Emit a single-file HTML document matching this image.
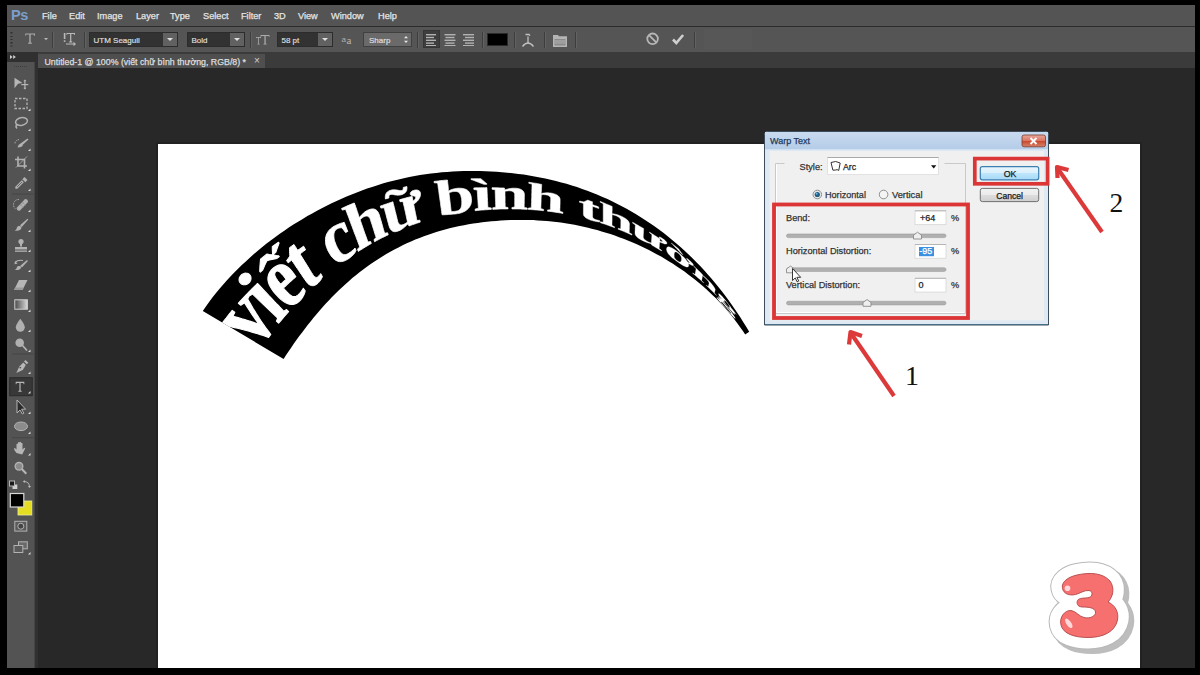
<!DOCTYPE html>
<html><head><meta charset="utf-8">
<style>
*{margin:0;padding:0;box-sizing:border-box}
html,body{width:1200px;height:675px;overflow:hidden;background:#000;font-family:"Liberation Sans",sans-serif}
.a{position:absolute}
#menubar{left:7px;top:5px;width:1188px;height:21px;background:#545454}
#menuline{left:7px;top:26px;width:1188px;height:1px;background:#2c2c2c}
.m{position:absolute;top:11px;font-size:9.2px;color:#e4e4e4;line-height:10px;-webkit-text-stroke:0.25px #e4e4e4}
#ps{left:11px;top:8px;font-size:14.5px;font-weight:bold;color:#7b9fcc;letter-spacing:-0.3px;line-height:14px}
#opts{left:7px;top:27px;width:1188px;height:25px;background:#555555}
#tabrow{left:35px;top:52px;width:1160px;height:16px;background:#3b3b3b}
#doc{left:35px;top:68px;width:1160px;height:600px;background:#282828}
#tab{left:38px;top:54px;width:227px;height:14px;background:#4f4f4f}
#tabtxt{left:44.5px;top:57.5px;font-size:8.8px;color:#dedede;white-space:nowrap;line-height:9px;-webkit-text-stroke:0.25px #dedede}
#tools{left:7px;top:52px;width:28px;height:616px;background:#535353;border-right:1px solid #454545}
#toolshead{left:7px;top:52px;width:28px;height:10px;background:#303030}
#canvas{left:158px;top:144px;width:982px;height:524px;background:#fff;box-shadow:0 0 0 2px #222}
.sep{position:absolute;top:32px;width:2px;height:16px;border-left:1px solid #3d3d3d;border-right:1px solid #626262}
.dd{position:absolute;top:32px;height:15px;background:#323232;border:1px solid #2c2c2c}
.dd span{position:absolute;left:3.5px;top:3px;font-size:8px;color:#dcdcdc;line-height:9px;white-space:nowrap;-webkit-text-stroke:0.2px #dcdcdc}
.dd i{position:absolute;right:0;top:0;width:14px;height:13px;background:#616161}
.dd i:after{content:"";position:absolute;left:4px;top:5px;border-left:3px solid transparent;border-right:3px solid transparent;border-top:3px solid #e0e0e0}
</style></head><body>
<div id="menubar" class="a"></div>
<div id="menuline" class="a"></div>
<div id="ps" class="a">Ps</div>
<span class="m" style="left:42px">File</span>
<span class="m" style="left:69px">Edit</span>
<span class="m" style="left:97px">Image</span>
<span class="m" style="left:136px">Layer</span>
<span class="m" style="left:170px">Type</span>
<span class="m" style="left:203px">Select</span>
<span class="m" style="left:241px">Filter</span>
<span class="m" style="left:274px">3D</span>
<span class="m" style="left:298px">View</span>
<span class="m" style="left:331px">Window</span>
<span class="m" style="left:378px">Help</span>

<div id="opts" class="a"></div>
<div class="sep" style="left:52px"></div>
<div class="sep" style="left:84px"></div>
<div class="dd" style="left:89px;width:89px"><span>UTM Seagull</span><i></i></div>
<div class="dd" style="left:187px;width:58px"><span>Bold</span><i></i></div>
<div class="sep" style="left:250px"></div>
<div class="dd" style="left:277px;width:56px"><span>58 pt</span><i></i></div>
<div class="dd" style="left:363px;width:49px;background:#6a6a6a;border-color:#404040"><span style="left:5px">Sharp</span></div>
<div class="sep" style="left:417px"></div>
<div class="a" style="left:423px;top:30px;width:17px;height:18px;background:#3e3e3e;border:1px solid #353535"></div>
<div class="sep" style="left:482px"></div>
<div class="a" style="left:487px;top:33px;width:21px;height:13px;background:#000;border:1px solid #2a2a2a"></div>
<div class="sep" style="left:514px"></div>
<div class="sep" style="left:544px"></div>
<div class="sep" style="left:575px"></div>
<div class="sep" style="left:694px"></div>
<div class="a" style="left:704px;top:29px;width:48px;height:20px;background:#575757"></div>

<div id="tabrow" class="a"></div>
<div id="doc" class="a"></div>
<div id="tab" class="a"></div>
<div id="tabtxt" class="a">Untitled-1 @ 100% (viết chữ bình thường, RGB/8) *</div>
<div class="a" style="left:254px;top:56px;font-size:10px;color:#cfcfcf;line-height:10px">×</div>
<div class="a" style="left:35px;top:52px;width:3px;height:616px;background:#303030"></div>
<div id="tools" class="a"></div>
<div id="toolshead" class="a"></div>
<div id="canvas" class="a"></div>

<svg class="a" style="left:0;top:0" width="1200" height="675" viewBox="0 0 1200 675">
<g fill="none" stroke="#b8b8b8">
<!-- options bar: grip -->
<g fill="#2e2e2e" stroke="none"><rect x="10.5" y="32" width="2" height="1.5"/><rect x="10.5" y="36" width="2" height="1"/><rect x="10.5" y="39" width="2" height="1"/><rect x="10.5" y="42" width="2" height="1.5"/><rect x="10.5" y="45.5" width="2" height="1"/></g>
<!-- T tool preset -->
<g fill="#a9a9a9" stroke="none">
<path d="M25.3 33.6h9.7v2.2h-0.8l-0.5-1.2h-3v7.8l1.2 0.4v1h-3.8v-1l1.2-0.4v-7.8h-3l-0.5 1.2h-0.5z"/>
<path d="M44 38h4l-2 2.2z" fill="#b6b6b6"/>
</g>
<!-- text orientation IT -->
<g fill="#b9b9b9" stroke="none">
<rect x="63.8" y="33" width="1.6" height="6"/><rect x="63.8" y="40.3" width="1.6" height="1.6"/>
<path d="M66.5 33h8.5v2h-0.6l-0.4-1h-2.7v7.3l1 0.3v0.8h-3.2v-0.8l1-0.3v-7.3h-2.7l-0.4 1h-0.5z"/>
<rect x="66" y="43.5" width="8" height="1"/><path d="M73.5 41.8l2.5 2.2-2.5 2.2z"/>
</g>
<!-- TT size -->
<g fill="#aaaaaa" stroke="none">
<path d="M256 37h5v1.2h-0.4l-0.3-0.5h-1.4v6h0.7v0.8h-2.2v-0.8h0.7v-6h-1.4l-0.3 0.5h-0.4z"/>
<path d="M260.5 35h9v1.8h-0.6l-0.4-0.9h-2.8v7.7l1 0.3v0.7h-3.3v-0.7l1-0.3v-7.7h-2.8l-0.4 0.9h-0.7z"/>
</g>
<!-- aa antialias -->
<text x="341.5" y="42" font-family="Liberation Sans" font-size="8" fill="#b0b0b0" stroke="none">a</text>
<text x="346.5" y="44" font-family="Liberation Serif" font-size="11" fill="#b8b8b8" stroke="none">a</text>
<!-- sharp spinner arrows -->
<g fill="#e8e8e8" stroke="none"><path d="M404 38.2l2-2.2 2 2.2z"/><path d="M404 40.8l2 2.2 2-2.2z"/></g>
<!-- align icons -->
<g fill="#b2b2b2" stroke="none">
<rect x="426" y="34" width="10" height="1.4"/><rect x="426" y="36.8" width="8" height="1.4"/><rect x="426" y="39.6" width="10" height="1.4"/><rect x="426" y="42.4" width="8" height="1.4"/><rect x="426" y="45" width="10" height="1"/>
<rect x="444.5" y="34" width="11" height="1.4"/><rect x="445.5" y="36.8" width="9" height="1.4"/><rect x="444.5" y="39.6" width="11" height="1.4"/><rect x="445.5" y="42.4" width="9" height="1.4"/><rect x="444.5" y="45" width="11" height="1"/>
<rect x="463" y="34" width="11" height="1.4"/><rect x="465" y="36.8" width="9" height="1.4"/><rect x="463" y="39.6" width="11" height="1.4"/><rect x="465" y="42.4" width="9" height="1.4"/><rect x="463" y="45" width="11" height="1"/>
</g>
<!-- warp icon -->
<g stroke="#c0c0c0" stroke-width="1.3">
<path d="M522.5 46.5q5.5-7 11 0"/>
<path d="M528 36.5v7"/><path d="M525.5 34.5h3.5l1 1.2"/>
</g>
<!-- panels icon -->
<g stroke="none">
<path d="M553 35h5l1 1.3h8v10.7h-14z" fill="#b4b4b4"/>
<rect x="554.5" y="39" width="11" height="6.5" fill="#8a8a8a"/>
<rect x="554.5" y="40.5" width="11" height="1" fill="#b4b4b4"/>
<rect x="554.5" y="42.5" width="11" height="1" fill="#b0b0b0"/>
</g>
<!-- cancel -->
<circle cx="652.6" cy="38.8" r="5.3" stroke="#b6b6b6" stroke-width="1.8"/>
<path d="M649 35.2l7.2 7.2" stroke="#b6b6b6" stroke-width="1.8"/>
<!-- commit check -->
<path d="M673 39.5l3.3 3.5 6.8-8" stroke="#cfcfcf" stroke-width="2.6"/>

<!-- tools panel -->
<g fill="#b2b2b2" stroke="none">
<path d="M10 55l2.6 2-2.6 2z" fill="#d0d0d0"/><path d="M13.2 55l2.6 2-2.6 2z" fill="#d0d0d0"/>
</g>
<path d="M14 66.5h14" stroke="#3e3e3e" stroke-width="1" stroke-dasharray="1 1"/>
<!-- move -->
<g fill="#b6b6b6" stroke="none">
<path d="M14.5 77.8l8 5.2-3.5 0.6-1.2 0.3-3.3 4.3z"/>
<path d="M24.3 80.5h1.2v8h-1.2z"/><path d="M21.3 84h7v1.2h-7z"/>
<path d="M24.9 79.5l1.6 1.8h-3.2z"/><path d="M24.9 89.5l1.6-1.8h-3.2z"/>
</g>
<!-- marquee -->
<rect x="15" y="98.5" width="12" height="10" stroke="#b2b2b2" stroke-width="1.3" stroke-dasharray="2.5 1.5"/>
<!-- lasso -->
<g stroke="#b0b0b0" stroke-width="1.5">
<ellipse cx="21.5" cy="121.5" rx="6" ry="3.8" transform="rotate(-12 21.5 121.5)"/>
<path d="M17 124.5q-2 2 0 4"/>
</g>
<!-- quick select -->
<g stroke="none" fill="#b2b2b2">
<path d="M27.5 138.5l1 1-6 5.5-2-1.5z"/>
<path d="M20.5 143.5q2 0 2.5 1.5q-1 2.5-5.5 2.5q0.5-3 3-4z"/>
</g>
<path d="M19 139.5q-4 1-4 4" stroke="#b8b8b8" stroke-width="1" stroke-dasharray="1.3 1"/>
<!-- crop -->
<g stroke="#b2b2b2" stroke-width="1.6">
<path d="M18 156.5v9.5h9"/><path d="M15 159.5h9.5v9"/><path d="M16 167.5l11-11" stroke-width="0.8"/>
</g>
<!-- eyedropper -->
<g stroke="none" fill="#b2b2b2">
<path d="M24.5 177l3 3-2.2 2.2-3-3z"/>
<path d="M21.8 180.2l2 2-6.5 6.5h-2v-2z"/>
</g>
<path d="M17 187l5-5" stroke="#535353" stroke-width="0.8"/>
<path d="M12 194h22" stroke="#474747" stroke-width="1"/>
<!-- healing -->
<g stroke="none" fill="#b0b0b0">
<path d="M25 199q3 0 3 3l-8 8.5q-3 1-3.5-2.5z"/>
</g>
<path d="M19 199.5q-5 0-5.5 5q0 3 2 4.5" stroke="#b4b4b4" stroke-width="1" stroke-dasharray="1.3 1"/>
<g fill="#8a8a8a" stroke="none"><circle cx="21" cy="205" r="0.8"/><circle cx="23" cy="203" r="0.8"/><circle cx="23" cy="207" r="0.8"/><circle cx="25" cy="205" r="0.8"/></g>
<!-- brush -->
<g stroke="none" fill="#b2b2b2">
<path d="M27.5 218.7l0.8 0.8-6.5 7.5-1.8-1.8z"/>
<path d="M18.5 226q2-0.5 3 1q0 2.5-3 3.5q-2 0.3-4 0.2q2-1 2.2-2.5q0.3-1.8 1.8-2.2z"/>
</g>
<!-- stamp -->
<g stroke="none" fill="#b2b2b2">
<circle cx="21" cy="241.5" r="2.6"/><rect x="20" y="243" width="2" height="3.5"/>
<path d="M15 247h12v2.5h-12z"/><rect x="15" y="250.5" width="12" height="1.3"/>
</g>
<!-- history brush -->
<g stroke="none" fill="#b2b2b2">
<path d="M27 260l0.9 0.9-6 6.5-1.6-1.6z"/>
<path d="M18.5 266q2-0.4 2.7 1q-0.2 2.5-3 3q-1.8 0.2-3.5 0q2-1 2-2.2q0.3-1.5 1.8-1.8z"/>
<path d="M15 262.5q3-3 8-2" stroke="#b2b2b2" stroke-width="1.2" fill="none"/>
<path d="M15 261l-0.5 3.2 3-0.5z"/>
</g>
<!-- eraser -->
<g stroke="none">
<path d="M19 280h8.5l-5 10h-8.5z" fill="#b6b6b6"/>
<path d="M14 290h8.5l1.2-2.5h-8.5z" fill="#9a9a9a"/>
</g>
<!-- gradient -->
<defs><linearGradient id="gr" x1="0" x2="1" y1="0" y2="0"><stop offset="0" stop-color="#4a4a4a"/><stop offset="1" stop-color="#d8d8d8"/></linearGradient></defs>
<rect x="14.8" y="299.8" width="12.6" height="9.4" fill="url(#gr)" stroke="#cfcfcf" stroke-width="1"/>
<!-- blur drop -->
<path d="M20.3 318.7q-4.5 6-4.5 8.5a4.5 4.5 0 0 0 9 0q0-2.5-4.5-8.5z" fill="#b0b0b0" stroke="none"/>
<!-- dodge -->
<circle cx="19.7" cy="342.7" r="4.3" fill="#b0b0b0" stroke="none"/>
<path d="M22.5 345.5l4.5 5" stroke="#b6b6b6" stroke-width="1.6"/>
<path d="M12 354h22" stroke="#474747" stroke-width="1"/>
<!-- pen -->
<g stroke="none" fill="#b6b6b6">
<path d="M25.5 360l2.8 2.8-1.5 1.5-2.8-2.8z"/>
<path d="M23.3 362.4l2.5 2.5-3 5-6.5 3.1 3-6.5z"/>
</g>
<circle cx="20.3" cy="367.6" r="0.9" fill="#535353" stroke="none"/>
<!-- type tool selected -->
<rect x="9.7" y="377.7" width="22.6" height="18" fill="#383838" stroke="#2c2c2c" stroke-width="1"/>
<path d="M15.7 381.7h8.6v2.5h-0.6l-0.5-1.3h-2.6v7.6l1.1 0.4v0.8h-3.4v-0.8l1.1-0.4v-7.6h-2.6l-0.5 1.3h-0.6z" fill="#b6b6b6" stroke="none"/>
<!-- path select -->
<path d="M17 400v13l3-3 2.3 4 1.5-0.8-2.2-4h4z" fill="#2a2a2a" stroke="#b6b6b6" stroke-width="1"/>
<!-- ellipse -->
<ellipse cx="21" cy="426.3" rx="6.5" ry="4.3" fill="#8c8c8c" stroke="#b4b4b4" stroke-width="1"/>
<path d="M12 437.7h22" stroke="#474747" stroke-width="1"/>
<!-- hand -->
<path d="M16.5 453q-2.5-3-2.5-4.5q0.5-1 1.5 0l1 1.3v-5.8q0.8-1 1.5 0v3.5v-5q0.8-1 1.5 0v5v-5.3q0.8-1 1.5 0v5.3v-4.3q0.8-1 1.5 0v6.5l1.2-1.5q1-0.8 1.5 0.3q-1.5 3-3 6z" fill="#b6b6b6" stroke="none"/>
<!-- zoom -->
<circle cx="19" cy="466.3" r="3.8" fill="#8a8a8a" stroke="#b2b2b2" stroke-width="1.4"/>
<path d="M21.8 469l4.5 4.8" stroke="#b6b6b6" stroke-width="2"/>
<!-- default colors -->
<rect x="12.5" y="484.5" width="4.8" height="4.5" fill="#d0d0d0" stroke="none"/>
<rect x="9.5" y="481" width="5" height="5" fill="#1a1a1a" stroke="#b6b6b6" stroke-width="1"/>
<!-- swap -->
<path d="M24 481.5q5 0 5.5 5" stroke="#b6b6b6" stroke-width="1"/>
<path d="M22.8 481.5l2-1.6v3.2z" fill="#b6b6b6" stroke="none"/><path d="M29.5 488l-1.6-2h3.2z" fill="#b6b6b6" stroke="none"/>
<!-- fg/bg -->
<rect x="18" y="501" width="13.8" height="14" fill="#e4dd22" stroke="#f0ee9a" stroke-width="0.8"/>
<rect x="10.3" y="493.5" width="13.5" height="13.5" fill="#000" stroke="#d8d8d8" stroke-width="1.2"/>
<!-- quick mask -->
<rect x="14.8" y="521.3" width="12" height="9.8" fill="#5a5a5a" stroke="#b2b2b2" stroke-width="1"/>
<circle cx="20.8" cy="526.2" r="3" fill="#444" stroke="#b2b2b2" stroke-width="1"/>
<!-- screen mode -->
<rect x="18.5" y="541.8" width="8.8" height="7" fill="#6a6a6a" stroke="#b2b2b2" stroke-width="1"/>
<rect x="14" y="545.5" width="8.8" height="7" fill="#5a5a5a" stroke="#b2b2b2" stroke-width="1"/>
<!-- little corner triangles -->
<g fill="#dcdcdc" stroke="none">
<path d="M30.5 108.5v2.5h-2.5z"/><path d="M30.5 128.5v2.5h-2.5z"/><path d="M30.5 148.5v2.5h-2.5z"/><path d="M30.5 168.5v2.5h-2.5z"/><path d="M30.5 188.5v2.5h-2.5z"/>
<path d="M30.5 209.5v2.5h-2.5z"/><path d="M30.5 229.5v2.5h-2.5z"/><path d="M30.5 249.5v2.5h-2.5z"/><path d="M30.5 269.5v2.5h-2.5z"/><path d="M30.5 289.5v2.5h-2.5z"/>
<path d="M30.5 309.5v2.5h-2.5z"/><path d="M30.5 329.5v2.5h-2.5z"/><path d="M30.5 349.5v2.5h-2.5z"/><path d="M30.5 371.5v2.5h-2.5z"/><path d="M30.5 391v2.5h-2.5z"/>
<path d="M30.5 411.5v2.5h-2.5z"/><path d="M30.5 431.5v2.5h-2.5z"/><path d="M30.5 453v2.5h-2.5z"/><path d="M30.5 552v2.5h-2.5z"/>
</g>
</g>

</svg>

<svg class="a" style="left:0;top:0" width="1200" height="675" viewBox="0 0 1200 675"><defs><clipPath id="bandclip"><path d="M202.8 310.9L205.9 306.4L209.1 301.9L212.4 297.6L215.8 293.3L219.3 289.0L222.8 284.9L226.5 280.8L230.2 276.8L234.0 272.8L237.8 268.9L241.8 265.1L245.8 261.4L249.8 257.7L253.9 254.1L258.1 250.5L262.3 247.1L266.6 243.6L271.0 240.3L275.4 237.0L279.8 233.8L284.3 230.7L288.8 227.6L293.4 224.6L298.1 221.7L302.7 218.9L307.4 216.1L312.2 213.4L317.0 210.7L321.8 208.2L326.7 205.7L331.6 203.3L336.6 200.9L341.6 198.7L346.6 196.5L351.7 194.4L356.8 192.4L361.9 190.5L367.1 188.6L372.2 186.9L377.5 185.2L382.7 183.6L388.0 182.1L393.3 180.7L398.6 179.4L403.9 178.2L409.3 177.0L414.7 176.0L420.0 175.1L425.5 174.2L430.9 173.5L436.3 172.9L441.8 172.3L447.2 171.9L452.7 171.5L458.2 171.3L463.6 171.1L469.1 171.1L474.6 171.0L480.1 171.1L485.6 171.3L491.0 171.5L496.5 171.8L502.0 172.2L507.4 172.7L512.9 173.2L518.3 173.9L523.7 174.6L529.1 175.4L534.5 176.4L539.9 177.4L545.3 178.5L550.6 179.7L555.9 181.0L561.2 182.4L566.5 183.8L571.8 185.4L577.0 187.1L582.2 188.9L587.3 190.7L592.4 192.7L597.5 194.7L602.5 196.9L607.5 199.1L612.5 201.5L617.4 203.9L622.3 206.4L627.1 209.0L631.8 211.7L636.5 214.5L641.2 217.4L645.8 220.4L650.4 223.4L654.8 226.6L659.3 229.8L663.7 233.1L668.0 236.5L672.2 239.9L676.4 243.4L680.5 247.0L684.6 250.7L688.6 254.5L692.5 258.3L696.4 262.2L700.2 266.1L703.9 270.1L707.6 274.2L711.2 278.3L714.7 282.5L718.2 286.7L721.6 291.0L724.9 295.3L728.2 299.7L731.4 304.2L734.5 308.7L737.6 313.2L740.6 317.8L743.5 322.4L746.4 327.1L749.2 331.8L745.2 334.6L742.7 330.7L740.0 326.9L737.3 323.2L734.5 319.5L731.7 315.8L728.7 312.3L725.7 308.8L722.6 305.3L719.4 301.9L716.2 298.6L712.9 295.4L709.5 292.2L706.1 289.0L702.7 286.0L699.1 283.0L695.5 280.0L691.9 277.2L688.2 274.4L684.5 271.6L680.7 269.0L676.9 266.4L673.0 263.8L669.1 261.4L665.1 259.0L661.1 256.6L657.1 254.4L653.0 252.2L648.9 250.1L644.7 248.0L640.5 246.0L636.3 244.1L632.1 242.3L627.8 240.5L623.5 238.8L619.1 237.2L614.8 235.6L610.4 234.1L606.0 232.7L601.6 231.4L597.1 230.1L592.6 228.9L588.1 227.8L583.6 226.7L579.1 225.7L574.6 224.8L570.0 224.0L565.4 223.3L560.8 222.6L556.3 222.0L551.7 221.5L547.0 221.0L542.4 220.7L537.8 220.4L533.2 220.1L528.6 220.0L523.9 219.9L519.3 219.9L514.7 220.0L510.0 220.1L505.4 220.3L500.8 220.6L496.2 220.9L491.5 221.3L486.9 221.8L482.3 222.3L477.7 222.9L473.2 223.6L468.6 224.3L464.0 225.2L459.5 226.1L455.0 227.1L450.5 228.1L446.0 229.3L441.5 230.5L437.1 231.8L432.7 233.2L428.3 234.7L423.9 236.2L419.6 237.9L415.3 239.6L411.0 241.4L406.8 243.3L402.6 245.3L398.5 247.4L394.4 249.5L390.3 251.7L386.3 254.0L382.3 256.4L378.4 258.9L374.5 261.4L370.7 264.0L366.9 266.7L363.2 269.5L359.5 272.3L355.9 275.2L352.3 278.1L348.8 281.2L345.4 284.2L341.9 287.4L338.6 290.6L335.3 293.8L332.0 297.1L328.8 300.4L325.6 303.8L322.5 307.2L319.5 310.7L316.5 314.2L313.5 317.8L310.6 321.4L307.7 325.0L304.9 328.7L302.1 332.4L299.3 336.1L296.6 339.8L293.9 343.6L291.3 347.4L288.7 351.3L286.1 355.1L283.6 359.0Z"/></clipPath></defs><path d="M202.8 310.9L205.9 306.4L209.1 301.9L212.4 297.6L215.8 293.3L219.3 289.0L222.8 284.9L226.5 280.8L230.2 276.8L234.0 272.8L237.8 268.9L241.8 265.1L245.8 261.4L249.8 257.7L253.9 254.1L258.1 250.5L262.3 247.1L266.6 243.6L271.0 240.3L275.4 237.0L279.8 233.8L284.3 230.7L288.8 227.6L293.4 224.6L298.1 221.7L302.7 218.9L307.4 216.1L312.2 213.4L317.0 210.7L321.8 208.2L326.7 205.7L331.6 203.3L336.6 200.9L341.6 198.7L346.6 196.5L351.7 194.4L356.8 192.4L361.9 190.5L367.1 188.6L372.2 186.9L377.5 185.2L382.7 183.6L388.0 182.1L393.3 180.7L398.6 179.4L403.9 178.2L409.3 177.0L414.7 176.0L420.0 175.1L425.5 174.2L430.9 173.5L436.3 172.9L441.8 172.3L447.2 171.9L452.7 171.5L458.2 171.3L463.6 171.1L469.1 171.1L474.6 171.0L480.1 171.1L485.6 171.3L491.0 171.5L496.5 171.8L502.0 172.2L507.4 172.7L512.9 173.2L518.3 173.9L523.7 174.6L529.1 175.4L534.5 176.4L539.9 177.4L545.3 178.5L550.6 179.7L555.9 181.0L561.2 182.4L566.5 183.8L571.8 185.4L577.0 187.1L582.2 188.9L587.3 190.7L592.4 192.7L597.5 194.7L602.5 196.9L607.5 199.1L612.5 201.5L617.4 203.9L622.3 206.4L627.1 209.0L631.8 211.7L636.5 214.5L641.2 217.4L645.8 220.4L650.4 223.4L654.8 226.6L659.3 229.8L663.7 233.1L668.0 236.5L672.2 239.9L676.4 243.4L680.5 247.0L684.6 250.7L688.6 254.5L692.5 258.3L696.4 262.2L700.2 266.1L703.9 270.1L707.6 274.2L711.2 278.3L714.7 282.5L718.2 286.7L721.6 291.0L724.9 295.3L728.2 299.7L731.4 304.2L734.5 308.7L737.6 313.2L740.6 317.8L743.5 322.4L746.4 327.1L749.2 331.8L745.2 334.6L742.7 330.7L740.0 326.9L737.3 323.2L734.5 319.5L731.7 315.8L728.7 312.3L725.7 308.8L722.6 305.3L719.4 301.9L716.2 298.6L712.9 295.4L709.5 292.2L706.1 289.0L702.7 286.0L699.1 283.0L695.5 280.0L691.9 277.2L688.2 274.4L684.5 271.6L680.7 269.0L676.9 266.4L673.0 263.8L669.1 261.4L665.1 259.0L661.1 256.6L657.1 254.4L653.0 252.2L648.9 250.1L644.7 248.0L640.5 246.0L636.3 244.1L632.1 242.3L627.8 240.5L623.5 238.8L619.1 237.2L614.8 235.6L610.4 234.1L606.0 232.7L601.6 231.4L597.1 230.1L592.6 228.9L588.1 227.8L583.6 226.7L579.1 225.7L574.6 224.8L570.0 224.0L565.4 223.3L560.8 222.6L556.3 222.0L551.7 221.5L547.0 221.0L542.4 220.7L537.8 220.4L533.2 220.1L528.6 220.0L523.9 219.9L519.3 219.9L514.7 220.0L510.0 220.1L505.4 220.3L500.8 220.6L496.2 220.9L491.5 221.3L486.9 221.8L482.3 222.3L477.7 222.9L473.2 223.6L468.6 224.3L464.0 225.2L459.5 226.1L455.0 227.1L450.5 228.1L446.0 229.3L441.5 230.5L437.1 231.8L432.7 233.2L428.3 234.7L423.9 236.2L419.6 237.9L415.3 239.6L411.0 241.4L406.8 243.3L402.6 245.3L398.5 247.4L394.4 249.5L390.3 251.7L386.3 254.0L382.3 256.4L378.4 258.9L374.5 261.4L370.7 264.0L366.9 266.7L363.2 269.5L359.5 272.3L355.9 275.2L352.3 278.1L348.8 281.2L345.4 284.2L341.9 287.4L338.6 290.6L335.3 293.8L332.0 297.1L328.8 300.4L325.6 303.8L322.5 307.2L319.5 310.7L316.5 314.2L313.5 317.8L310.6 321.4L307.7 325.0L304.9 328.7L302.1 332.4L299.3 336.1L296.6 339.8L293.9 343.6L291.3 347.4L288.7 351.3L286.1 355.1L283.6 359.0Z" fill="#000"/><g fill="#fff" stroke="#fff" stroke-linejoin="round" clip-path="url(#bandclip)"><path d="M270.8 334.5L269.7 335.9L268.6 337.4L265.9 336.4L263.2 335.5L260.4 334.6L257.6 333.7L254.8 332.9L252.0 332.1L249.2 331.3L246.3 330.5L243.4 329.7L240.5 329.0L237.6 328.3L234.6 327.6L231.7 327.0L228.7 326.3L226.3 324.9L225.2 324.2L222.5 322.6L222.6 322.7L223.2 321.9L224.7 319.9L226.2 318.0L227.7 316.0L229.2 314.1L230.7 312.3L232.2 310.4L234.8 312.2L233.0 316.3L236.0 317.1L238.9 317.9L241.9 318.8L244.8 319.6L247.7 320.5L250.5 321.4L253.4 322.4L256.2 323.3L259.0 324.3L257.3 322.0L255.6 319.6L253.9 317.2L252.3 314.9L250.7 312.5L249.1 310.0L247.6 307.6L246.0 305.2L244.5 302.7L240.8 305.2L238.4 303.2L240.0 301.4L241.7 299.6L243.3 297.9L245.0 296.1L246.6 294.4L248.9 296.4L247.7 298.9L249.1 301.4L250.5 303.8L251.9 306.3L253.3 308.7L254.8 311.1L256.3 313.6L257.8 315.9L259.3 318.3L260.9 320.7L262.5 323.0L264.1 325.3L265.8 327.7L267.4 329.9L269.1 332.2Z" stroke-width="1.12"/><path d="M283.7 311.2L286.6 309.5L288.6 311.7L287.3 313.1L286.0 314.6L284.8 316.0L283.5 317.4L282.3 318.9L281.1 320.3L279.8 321.8L278.6 323.2L276.4 321.2L277.7 318.0L275.6 316.0L273.5 314.0L271.4 312.0L269.3 310.0L267.2 308.0L265.1 306.1L263.0 304.1L260.9 302.1L258.8 300.1L256.8 298.1L254.7 296.1L252.6 294.1L249.2 296.0L247.0 294.0L248.7 292.2L250.5 290.4L252.2 288.7L254.0 286.9L255.8 285.2L257.5 283.5L259.4 285.5L261.3 287.5L263.1 289.4L265.0 291.4L266.9 293.4L268.7 295.4L270.6 297.3L272.5 299.3L274.3 301.3L276.2 303.3L278.1 305.2L279.9 307.2L281.8 309.2ZM240.6 283.3L240.1 282.7L239.7 282.1L239.3 281.5L239.2 280.8L239.1 280.1L239.1 279.3L239.2 278.5L239.4 277.7L239.8 277.0L240.2 276.3L240.7 275.7L241.3 275.0L241.9 274.5L242.6 274.0L243.4 273.7L244.1 273.4L244.9 273.2L245.7 273.1L246.5 273.2L247.2 273.3L247.9 273.5L248.5 273.8L249.1 274.2L249.7 274.7L250.1 275.3L250.5 275.9L250.8 276.5L250.9 277.2L251.0 277.9L251.0 278.7L250.9 279.4L250.7 280.2L250.4 280.9L250.0 281.6L249.6 282.2L249.0 282.8L248.4 283.3L247.7 283.8L247.0 284.2L246.3 284.4L245.5 284.6L244.7 284.7L243.9 284.7L243.2 284.6L242.5 284.5L241.8 284.2L241.2 283.8Z" stroke-width="1.09"/><path d="M273.4 268.0L275.2 266.7L277.0 265.7L278.7 265.0L280.4 264.7L282.1 264.7L283.8 265.0L285.4 265.7L287.1 266.7L288.8 268.0L290.5 269.6L292.2 271.6L293.9 273.9L295.9 276.7L294.3 278.0L292.7 279.4L291.2 280.8L289.6 282.2L288.1 283.6L286.5 285.1L285.0 286.5L283.5 288.0L283.9 288.5L285.2 290.1L286.4 291.4L287.6 292.6L288.6 293.6L289.5 294.4L290.3 295.0L291.0 295.5L291.8 295.9L292.5 296.2L293.3 296.4L294.0 296.5L294.7 296.5L295.4 296.4L296.1 296.2L296.8 295.8L297.5 295.4L298.2 294.9L298.9 294.2L299.6 293.5L300.3 292.7L301.0 291.7L301.8 290.7L302.5 289.5L303.3 288.3L305.2 290.9L305.0 291.7L304.8 292.5L304.5 293.3L304.2 294.2L303.8 295.0L303.3 295.9L302.9 296.8L302.4 297.6L301.8 298.4L301.3 299.1L300.7 299.8L300.1 300.5L298.4 302.0L296.7 303.2L294.9 304.0L293.1 304.5L291.3 304.6L289.3 304.3L287.3 303.6L285.2 302.6L283.0 301.1L280.7 299.3L278.4 297.1L275.9 294.5L273.7 291.9L271.8 289.3L270.3 286.8L269.1 284.4L268.3 282.0L267.9 279.8L267.9 277.6L268.3 275.5L269.0 273.5L270.1 271.6L271.6 269.7ZM275.8 271.7L275.3 272.2L275.0 272.8L274.8 273.5L274.7 274.2L274.8 275.1L275.1 276.0L275.5 277.0L276.1 278.2L277.0 279.5L278.0 281.0L279.2 282.6L280.6 284.4L282.5 282.7L284.3 281.0L286.2 279.3L285.1 277.9L284.1 276.6L283.2 275.5L282.4 274.6L281.6 273.8L281.0 273.2L280.5 272.6L280.0 272.2L279.5 271.8L279.0 271.5L278.5 271.3L278.1 271.1L277.7 271.1L277.3 271.0L276.9 271.1L276.5 271.2L276.1 271.4ZM260.4 272.1L259.7 271.3L259.8 268.8L259.9 266.4L260.1 264.0L260.3 261.6L260.5 259.2L262.7 257.4L264.8 255.7L267.0 254.0L269.4 254.4L271.7 254.7L274.0 255.0L276.3 255.4L278.6 255.7L279.3 256.6L277.0 258.4L274.5 258.9L272.0 259.5L269.5 260.1L267.0 260.7L265.8 263.0L264.7 265.4L263.7 267.8L262.6 270.2ZM273.2 254.4L272.5 253.5L272.4 251.2L272.3 248.9L272.3 246.6L274.3 245.1L276.4 243.6L278.5 242.2L279.1 243.1L278.3 245.4L277.4 247.7L276.6 250.1L275.8 252.4Z" stroke-width="1.05"/><path d="M318.0 283.3L316.9 284.1L315.9 284.8L314.8 285.3L313.8 285.6L312.8 285.7L311.7 285.6L310.7 285.4L309.7 284.9L308.7 284.3L307.8 283.5L306.9 282.4L306.0 281.2L304.5 279.1L303.1 277.0L301.7 274.9L300.2 272.8L298.8 270.7L297.4 268.6L295.9 266.5L294.5 264.3L293.1 262.2L291.6 260.1L289.9 261.5L288.2 262.9L286.6 260.6L288.2 258.4L289.9 256.1L289.7 253.9L289.6 251.8L289.5 249.7L289.5 247.7L291.7 246.1L294.0 244.5L295.2 246.4L296.4 248.3L297.7 250.3L299.6 249.0L301.6 247.6L303.6 246.2L305.6 249.8L303.7 251.1L301.8 252.5L299.9 253.9L301.2 255.9L302.5 258.0L303.7 260.0L305.0 262.1L306.3 264.1L307.6 266.2L308.9 268.3L310.1 270.3L311.4 272.4L312.7 274.4L313.2 275.1L313.6 275.7L314.1 276.2L314.5 276.6L315.0 276.9L315.5 277.2L315.9 277.3L316.3 277.4L316.7 277.4L317.1 277.3L317.5 277.1L317.9 276.8L318.3 276.4L318.8 276.0L319.2 275.4L319.7 274.9L320.2 274.3L320.7 273.6L322.4 276.5L322.3 276.9L322.1 277.4L321.9 278.0L321.5 278.6L321.2 279.2L320.7 279.9L320.3 280.6L319.8 281.2L319.4 281.8L318.9 282.3L318.4 282.8Z" stroke-width="1.00"/><path d="M356.0 250.5L355.7 251.2L355.4 251.8L355.0 252.5L354.5 253.2L354.0 253.9L353.4 254.6L352.8 255.2L352.1 255.9L351.4 256.5L350.7 257.1L350.0 257.7L349.3 258.2L347.2 259.5L345.1 260.6L343.1 261.3L341.2 261.6L339.4 261.6L337.7 261.2L336.0 260.4L334.3 259.3L332.7 257.8L331.2 256.0L329.7 253.7L328.2 251.1L327.4 249.4L326.8 247.7L326.2 246.0L325.8 244.3L325.6 242.7L325.5 241.1L325.5 239.5L325.6 238.0L325.9 236.5L326.3 235.1L326.9 233.7L327.6 232.4L328.4 231.2L329.4 230.0L330.4 229.0L331.6 228.0L332.8 227.1L334.2 226.2L335.7 225.5L337.3 224.7L338.9 224.1L340.6 223.4L342.4 222.9L344.2 222.3L345.1 224.6L346.0 226.9L346.9 229.2L347.8 231.4L345.6 232.6L343.9 230.3L342.2 227.9L341.7 227.8L341.3 227.8L340.8 227.8L340.4 227.8L340.0 227.8L339.6 227.9L339.2 228.0L338.8 228.1L338.4 228.3L337.9 228.5L337.4 228.7L336.8 229.0L336.3 229.4L335.7 229.8L335.3 230.4L334.9 231.0L334.5 231.7L334.3 232.4L334.0 233.2L333.9 234.1L333.8 235.1L333.8 236.0L333.9 237.1L334.0 238.2L334.2 239.3L334.5 240.4L334.8 241.6L335.3 242.9L335.8 244.2L336.3 245.5L337.3 247.6L338.4 249.4L339.4 250.9L340.4 252.2L341.4 253.2L342.4 253.9L343.4 254.4L344.4 254.6L345.5 254.6L346.6 254.3L347.8 253.8L349.0 253.1L350.2 252.3L351.3 251.5L352.3 250.6L353.3 249.7L354.2 248.9L355.0 248.0Z" stroke-width="0.92"/><path d="M357.8 213.0L358.0 213.6L358.2 214.2L358.4 215.0L358.7 215.9L359.0 216.8L359.2 217.7L361.0 215.6L362.3 214.3L363.5 213.1L364.7 212.0L366.0 211.2L367.2 210.4L368.4 209.9L371.1 209.1L373.4 208.9L375.4 209.5L377.0 210.7L378.3 212.5L379.3 215.0L379.9 217.1L380.5 219.1L381.1 221.1L381.7 223.2L382.3 225.2L382.8 227.2L383.4 229.3L384.0 231.3L384.6 233.3L387.6 232.8L388.2 234.8L386.2 235.7L384.3 236.7L382.3 237.6L380.4 238.6L378.5 239.6L376.6 240.6L374.6 241.7L374.0 239.6L376.2 237.6L375.5 235.6L374.9 233.7L374.3 231.7L373.7 229.8L373.1 227.9L372.5 225.9L371.9 224.0L371.2 222.1L370.6 220.1L370.3 219.3L370.0 218.5L369.6 217.9L369.2 217.3L368.7 216.9L368.2 216.5L367.7 216.2L367.1 216.1L366.5 216.0L365.9 216.0L365.2 216.2L364.5 216.5L363.7 216.8L363.0 217.3L362.2 217.8L361.5 218.4L360.8 219.0L360.1 219.7L360.8 221.7L361.5 223.8L362.2 225.8L362.9 227.8L363.6 229.9L364.3 231.9L365.0 233.9L365.8 236.0L366.5 238.0L367.2 240.0L367.9 242.1L370.6 241.5L371.3 243.5L369.4 244.6L367.5 245.7L365.7 246.8L363.8 247.9L362.0 249.1L360.1 250.2L358.3 251.4L357.5 249.2L359.7 246.9L359.0 244.8L358.2 242.8L357.5 240.8L356.7 238.8L356.0 236.8L355.2 234.8L354.4 232.8L353.7 230.8L352.9 228.8L352.2 226.8L351.4 224.8L350.7 222.8L349.9 220.8L349.2 218.7L348.6 217.1L348.0 215.6L347.4 214.0L346.8 212.4L346.2 210.9L345.6 209.3L342.3 210.1L341.6 208.5L343.7 207.5L345.8 206.6L348.0 205.6L350.1 204.7L352.2 203.8L354.3 203.0L354.9 204.6L355.5 206.3L356.1 208.0L356.7 209.7L357.2 211.4Z" stroke-width="0.86"/><path d="M420.4 192.9L420.5 193.7L420.5 194.6L420.4 195.6L420.1 196.6L419.7 197.5L419.2 198.5L418.6 199.5L417.9 200.5L417.0 201.4L416.0 202.3L414.9 203.2L413.6 204.1L414.0 205.9L414.3 207.7L414.7 209.6L415.1 211.4L415.4 213.2L415.8 215.0L416.2 216.8L416.5 218.6L416.9 220.5L419.9 220.2L420.2 222.1L418.4 222.7L416.5 223.3L414.6 224.0L412.7 224.6L410.8 225.3L409.0 226.0L408.0 223.8L406.2 225.5L404.9 226.7L403.7 227.8L402.5 228.7L401.3 229.5L400.2 230.2L399.0 230.7L396.6 231.5L394.5 231.7L392.7 231.2L391.2 230.0L389.9 228.2L389.0 225.8L388.5 223.8L387.9 221.8L387.4 219.8L386.8 217.8L386.3 215.7L385.8 213.7L385.2 211.7L384.7 209.7L384.1 207.7L380.9 208.1L380.3 206.1L382.4 205.4L384.5 204.6L386.6 203.9L388.7 203.2L390.8 202.5L392.9 201.8L393.3 203.7L393.8 205.6L394.3 207.6L394.8 209.5L395.2 211.4L395.7 213.3L396.2 215.2L396.7 217.2L397.1 219.1L397.6 221.0L397.8 221.8L398.1 222.5L398.4 223.1L398.8 223.6L399.2 224.1L399.6 224.4L400.1 224.7L400.7 224.9L401.2 225.0L401.8 224.9L402.4 224.8L403.1 224.6L403.9 224.3L404.6 223.9L405.4 223.5L406.1 223.0L406.8 222.5L407.5 221.9L407.1 220.0L406.7 218.2L406.3 216.3L405.9 214.5L405.5 212.6L405.1 210.8L404.7 208.9L404.3 207.1L403.8 205.2L403.4 203.4L403.0 201.5L400.0 201.7L399.6 199.8L401.7 199.1L403.7 198.6L405.8 198.0L407.9 197.4L410.0 196.9L412.1 196.4L412.6 198.8L413.0 201.2L413.9 200.4L414.6 199.7L415.2 199.1L415.5 198.4L415.7 197.8L415.6 197.2L415.6 197.0L415.5 196.9L415.4 196.7L415.3 196.6L415.2 196.5L415.0 196.4L414.8 196.3L414.5 196.2L414.2 196.1L413.9 196.0L413.5 195.9L413.0 195.8L412.3 195.7L411.6 195.5L411.1 195.2L410.7 194.9L410.4 194.5L410.3 194.0L410.2 193.6L410.3 193.2L410.4 192.8L410.6 192.5L410.8 192.1L411.2 191.7L411.6 191.4L412.0 191.1L412.5 190.8L413.1 190.6L413.7 190.4L414.3 190.2L415.1 190.1L415.9 190.0L416.6 190.0L417.2 190.1L417.9 190.2L418.5 190.5L419.0 190.7L419.4 191.1L419.8 191.4L420.1 191.9L420.3 192.4ZM401.0 194.8L400.0 195.0L398.9 195.1L397.8 195.2L396.6 195.1L395.3 194.9L393.9 194.7L393.2 194.5L392.6 194.4L392.0 194.4L391.5 194.4L391.0 194.4L390.6 194.5L390.2 194.7L389.9 194.8L389.7 194.9L389.4 195.1L389.3 195.3L389.1 195.5L389.1 195.8L389.0 196.1L388.9 196.4L388.9 196.9L388.9 197.3L388.9 197.9L385.4 199.0L385.3 197.8L385.3 196.7L385.4 195.7L385.6 194.8L385.9 193.9L386.3 193.2L386.8 192.5L387.4 191.9L388.2 191.4L389.0 190.9L390.0 190.5L391.0 190.2L391.6 190.0L392.1 189.9L392.6 189.8L393.2 189.8L393.7 189.8L394.1 189.8L394.7 189.8L395.2 189.8L395.9 189.9L396.6 190.0L397.4 190.1L398.2 190.3L399.0 190.4L399.6 190.5L400.2 190.6L400.7 190.6L401.1 190.6L401.5 190.5L401.7 190.5L401.9 190.4L402.1 190.3L402.2 190.3L402.4 190.2L402.5 190.1L402.6 190.0L402.7 189.9L402.8 189.8L402.9 189.7L403.0 189.6L403.1 189.5L403.1 189.3L403.2 189.1L403.2 188.8L403.3 188.4L403.3 188.0L403.3 187.4L406.9 186.6L407.0 187.7L406.9 188.7L406.8 189.7L406.6 190.5L406.2 191.3L405.8 192.0L405.2 192.6L404.6 193.2L403.8 193.7L403.0 194.1L402.0 194.5Z" stroke-width="0.80"/><path d="M461.7 199.8L461.5 198.3L461.2 197.0L460.9 195.8L460.5 194.8L460.0 193.9L459.5 193.1L458.8 192.5L458.1 192.0L457.3 191.7L456.3 191.5L455.3 191.4L454.2 191.4L453.7 191.5L453.3 191.6L452.8 191.6L452.4 191.7L451.9 191.8L451.4 192.0L450.9 192.1L450.5 192.2L450.0 192.4L449.6 192.6L449.3 192.7L449.0 192.9L449.2 194.6L449.4 196.3L449.6 198.0L449.8 199.7L450.0 201.4L450.2 203.1L450.4 204.8L450.6 206.5L450.8 208.2L451.0 209.9L451.2 211.6L451.9 211.6L452.7 211.5L453.5 211.5L454.4 211.4L455.3 211.3L456.3 211.1L457.3 210.9L458.3 210.5L459.1 210.1L459.8 209.5L460.4 208.8L460.9 207.9L461.3 207.0L461.5 205.9L461.7 204.6L461.8 203.1L461.8 201.6ZM437.6 182.9L434.2 182.8L434.0 181.5L436.2 181.2L438.5 180.9L440.7 180.6L442.9 180.4L445.2 180.2L447.4 180.0L447.6 181.4L447.7 182.8L447.9 184.2L448.1 185.5L448.2 186.9L448.3 187.6L448.4 188.2L448.4 188.8L448.4 189.5L448.4 190.4L448.4 191.2L448.9 190.9L449.4 190.6L450.0 190.2L450.6 189.9L451.4 189.6L452.2 189.4L453.0 189.1L453.8 188.9L454.7 188.7L455.5 188.5L456.3 188.4L457.1 188.3L459.4 188.2L461.4 188.3L463.2 188.6L464.9 189.0L466.3 189.6L467.6 190.4L468.6 191.3L469.5 192.5L470.2 193.8L470.8 195.3L471.2 197.0L471.4 198.9L471.5 200.8L471.3 202.6L470.9 204.3L470.2 205.8L469.3 207.3L468.2 208.6L466.9 209.8L465.4 210.9L463.7 211.8L461.8 212.6L459.8 213.2L457.5 213.6L455.6 213.9L453.5 214.1L451.1 214.3L448.3 214.5L445.4 214.7L442.1 214.8L441.8 213.2L441.6 211.6L441.4 209.9L441.2 208.3L440.9 206.7L440.7 205.1L440.5 203.4L440.3 201.8L440.0 200.2L439.8 198.6L439.6 196.9L439.3 195.3L439.1 193.7L438.9 192.0L438.7 190.4L438.5 189.2L438.3 187.9L438.1 186.6L438.0 185.4L437.8 184.1Z" stroke-width="0.73"/><path d="M487.9 207.5L491.3 207.9L491.3 209.4L489.3 209.5L487.3 209.7L485.3 209.8L483.3 210.0L481.3 210.1L479.2 210.3L477.2 210.5L475.2 210.7L475.1 209.1L478.4 208.2L478.3 206.7L478.2 205.2L478.1 203.7L478.0 202.1L477.9 200.6L477.8 199.1L477.7 197.6L477.6 196.1L477.5 194.5L477.4 193.0L477.3 191.5L477.2 190.0L473.9 189.5L473.8 187.9L476.0 187.8L478.2 187.8L480.4 187.7L482.5 187.7L484.7 187.7L486.9 187.6L487.0 189.1L487.1 190.5L487.1 191.9L487.2 193.3L487.3 194.7L487.3 196.2L487.4 197.6L487.5 199.0L487.5 200.4L487.6 201.8L487.7 203.3L487.7 204.7L487.8 206.1ZM483.9 184.3L482.1 183.6L480.2 182.9L478.4 182.2L476.5 181.5L474.7 180.8L472.8 180.1L471.0 179.5L470.9 178.8L473.4 178.7L475.9 178.7L478.4 178.7L480.8 178.7L482.0 179.7L483.2 180.7L484.4 181.7L485.6 182.7L486.8 183.7L486.8 184.3Z" stroke-width="0.68"/><path d="M504.9 189.9L507.2 189.2L508.7 188.8L510.2 188.5L511.7 188.3L513.1 188.2L514.4 188.2L515.7 188.2L518.4 188.6L520.6 189.3L522.3 190.3L523.5 191.5L524.2 193.0L524.4 194.8L524.4 196.2L524.4 197.6L524.3 199.0L524.3 200.4L524.3 201.8L524.3 203.2L524.2 204.6L524.2 206.0L524.2 207.4L527.2 208.0L527.2 209.4L525.0 209.3L522.8 209.2L520.7 209.1L518.5 209.0L516.3 209.0L514.1 209.0L511.9 208.9L511.9 207.5L514.7 207.0L514.7 205.7L514.7 204.3L514.7 203.0L514.7 201.7L514.7 200.3L514.7 199.0L514.7 197.6L514.7 196.3L514.7 195.0L514.7 194.4L514.6 193.8L514.4 193.3L514.2 192.9L513.9 192.4L513.5 192.1L513.1 191.7L512.6 191.4L512.1 191.2L511.5 191.0L510.8 190.9L510.1 190.8L509.2 190.8L508.4 190.8L507.5 190.9L506.7 191.0L505.8 191.1L505.0 191.3L505.0 192.7L505.0 194.2L505.0 195.6L505.1 197.0L505.1 198.4L505.1 199.9L505.1 201.3L505.1 202.7L505.2 204.1L505.2 205.5L505.2 207.0L508.0 207.5L508.1 208.9L505.9 209.0L503.7 209.0L501.5 209.0L499.3 209.1L497.1 209.2L495.0 209.3L492.8 209.4L492.7 207.8L495.7 207.2L495.7 205.7L495.6 204.3L495.6 202.8L495.5 201.4L495.5 199.9L495.4 198.5L495.4 197.0L495.3 195.6L495.3 194.1L495.2 192.7L495.2 191.2L495.2 189.8L492.0 189.2L492.0 187.7L494.0 187.7L496.1 187.7L498.2 187.8L500.2 187.9L502.3 187.9L504.4 188.0Z" stroke-width="0.64"/><path d="M541.5 190.6L541.4 190.9L541.4 191.3L541.4 191.8L541.3 192.3L541.2 192.8L541.2 193.4L543.5 193.1L545.0 192.9L546.5 192.8L547.9 192.8L549.3 192.9L550.6 193.0L551.9 193.2L554.4 193.9L556.5 194.7L558.1 195.8L559.3 197.1L560.0 198.5L560.1 200.1L560.1 201.4L560.1 202.6L560.1 203.8L560.0 205.1L560.0 206.3L560.0 207.6L559.9 208.8L559.9 210.0L559.9 211.3L562.9 212.2L562.9 213.5L560.7 213.1L558.5 212.7L556.3 212.4L554.1 212.1L551.9 211.7L549.7 211.4L547.5 211.2L547.6 209.9L550.4 209.8L550.4 208.6L550.4 207.4L550.5 206.2L550.5 205.0L550.6 203.8L550.6 202.6L550.6 201.5L550.7 200.3L550.7 199.1L550.7 198.5L550.6 198.1L550.5 197.6L550.3 197.1L550.0 196.7L549.6 196.4L549.2 196.0L548.8 195.7L548.2 195.4L547.7 195.2L547.0 195.0L546.3 194.9L545.5 194.7L544.7 194.7L543.8 194.6L543.0 194.6L542.2 194.7L541.3 194.7L541.3 196.0L541.2 197.3L541.2 198.5L541.1 199.8L541.1 201.1L541.1 202.3L541.0 203.6L541.0 204.8L540.9 206.1L540.9 207.4L540.8 208.6L543.6 209.4L543.6 210.7L541.4 210.5L539.2 210.3L537.0 210.1L534.8 209.9L532.6 209.7L530.4 209.6L528.2 209.4L528.3 208.1L531.3 207.8L531.3 206.5L531.4 205.3L531.4 204.0L531.5 202.7L531.5 201.5L531.5 200.2L531.6 198.9L531.6 197.7L531.7 196.4L531.7 195.1L531.7 193.9L531.8 192.6L531.8 191.3L531.8 190.1L531.9 189.0L531.9 188.1L531.9 187.1L532.0 186.1L532.0 185.1L532.0 184.1L528.8 183.3L528.8 182.2L531.0 182.6L533.1 182.9L535.3 183.2L537.4 183.6L539.6 184.0L541.7 184.4L541.7 185.4L541.6 186.4L541.6 187.5L541.5 188.5L541.5 189.5Z" stroke-width="0.58"/><path d="M592.4 220.6L591.0 220.2L589.8 219.8L588.6 219.3L587.6 218.8L586.6 218.3L585.8 217.8L585.1 217.2L584.5 216.6L584.0 216.0L583.7 215.4L583.5 214.8L583.4 214.1L583.4 213.1L583.4 212.0L583.4 210.9L583.4 209.8L583.4 208.8L583.4 207.7L583.4 206.6L583.4 205.6L583.4 204.5L583.4 203.4L581.5 202.8L579.5 202.3L579.5 201.1L581.8 201.5L584.1 201.9L585.0 201.3L585.9 200.9L586.9 200.5L587.8 200.1L590.1 201.0L592.5 201.8L592.5 202.7L592.5 203.6L592.5 204.6L594.6 205.4L596.7 206.1L598.7 206.9L598.7 208.6L596.7 207.8L594.6 207.1L592.5 206.4L592.5 207.4L592.5 208.4L592.5 209.4L592.5 210.4L592.6 211.4L592.6 212.4L592.6 213.4L592.6 214.4L592.6 215.4L592.6 216.4L592.6 216.8L592.7 217.1L592.8 217.5L593.0 217.8L593.2 218.1L593.4 218.3L593.7 218.6L594.1 218.8L594.4 219.0L594.8 219.2L595.2 219.4L595.7 219.6L596.2 219.7L596.9 219.9L597.5 220.1L598.2 220.2L598.9 220.4L599.7 220.6L599.7 222.0L599.4 222.0L599.0 221.9L598.5 221.9L597.9 221.8L597.3 221.7L596.5 221.6L595.8 221.5L595.1 221.3L594.4 221.1L593.7 221.0L593.0 220.8Z" stroke-width="0.49"/><path d="M612.1 211.4L612.1 211.6L612.1 211.9L612.1 212.3L612.1 212.7L612.0 213.1L611.9 213.5L614.1 213.9L615.5 214.2L616.9 214.6L618.2 215.0L619.5 215.4L620.7 215.9L621.8 216.4L624.2 217.7L626.2 219.0L627.7 220.3L628.7 221.6L629.3 222.9L629.5 224.2L629.5 225.1L629.4 226.1L629.4 227.0L629.4 227.9L629.4 228.9L629.3 229.8L629.3 230.7L629.3 231.6L629.2 232.6L632.0 234.2L631.9 235.1L630.0 234.2L628.0 233.3L626.1 232.5L624.1 231.6L622.1 230.8L620.2 230.0L618.2 229.2L618.2 228.2L620.7 228.9L620.7 227.9L620.7 227.0L620.8 226.1L620.8 225.2L620.8 224.3L620.8 223.4L620.8 222.5L620.8 221.6L620.9 220.6L620.8 220.2L620.8 219.8L620.6 219.4L620.4 219.0L620.2 218.6L619.8 218.2L619.5 217.8L619.0 217.5L618.5 217.1L618.0 216.8L617.4 216.4L616.8 216.1L616.0 215.8L615.2 215.5L614.4 215.2L613.7 215.0L612.9 214.8L612.1 214.6L612.1 215.6L612.1 216.6L612.1 217.5L612.1 218.5L612.1 219.5L612.1 220.5L612.1 221.5L612.0 222.5L612.0 223.4L612.0 224.4L612.0 225.4L614.6 226.8L614.6 227.8L612.6 227.0L610.6 226.3L608.5 225.5L606.5 224.8L604.5 224.1L602.4 223.4L600.4 222.7L600.4 221.7L603.2 222.2L603.2 221.2L603.2 220.2L603.2 219.3L603.2 218.3L603.2 217.3L603.2 216.3L603.2 215.3L603.2 214.3L603.2 213.3L603.2 212.3L603.2 211.3L603.2 210.3L603.2 209.3L603.2 208.3L603.2 207.5L603.2 206.8L603.2 206.0L603.2 205.2L603.2 204.5L603.2 203.7L600.2 202.2L600.2 201.3L602.2 202.2L604.2 203.0L606.2 203.9L608.2 204.7L610.2 205.6L612.2 206.5L612.2 207.4L612.2 208.2L612.2 209.0L612.2 209.8L612.2 210.6Z" stroke-width="0.44"/><path d="M667.0 243.3L666.9 243.5L666.7 243.8L666.5 243.9L666.1 244.0L665.6 244.1L665.1 244.0L664.4 243.9L663.7 243.6L662.8 243.3L661.9 243.0L660.9 242.5L659.7 242.0L659.7 242.7L659.6 243.4L659.5 244.1L659.5 244.9L659.4 245.6L659.4 246.3L659.3 247.0L659.2 247.8L659.2 248.5L661.6 250.3L661.6 251.0L659.9 250.0L658.3 249.0L656.6 248.0L655.0 247.1L653.3 246.1L651.6 245.1L651.3 243.9L649.4 243.3L648.1 242.9L646.8 242.4L645.6 242.0L644.4 241.5L643.3 241.0L642.2 240.4L640.0 239.2L638.1 238.0L636.7 236.7L635.7 235.5L635.1 234.3L635.0 233.0L635.0 232.1L635.0 231.2L635.1 230.3L635.1 229.4L635.1 228.5L635.2 227.6L635.2 226.7L635.3 225.8L635.3 224.9L632.5 223.1L632.6 222.2L634.5 223.2L636.3 224.3L638.2 225.3L640.0 226.4L641.9 227.4L643.7 228.5L643.7 229.3L643.6 230.2L643.6 231.0L643.6 231.8L643.5 232.7L643.5 233.5L643.4 234.3L643.4 235.2L643.3 236.0L643.3 236.8L643.3 237.2L643.4 237.5L643.5 237.9L643.7 238.3L643.9 238.6L644.2 239.0L644.5 239.4L644.9 239.8L645.4 240.1L645.9 240.5L646.4 240.8L647.0 241.2L647.7 241.5L648.4 241.9L649.2 242.2L649.9 242.5L650.6 242.8L651.3 243.1L651.3 242.4L651.4 241.6L651.4 240.8L651.5 240.0L651.6 239.3L651.6 238.5L651.7 237.7L651.7 237.0L651.8 236.2L651.8 235.4L651.9 234.7L649.5 232.8L649.5 232.0L651.3 233.2L653.0 234.3L654.8 235.4L656.5 236.6L658.3 237.7L660.0 238.9L659.9 239.8L659.8 240.8L660.6 241.2L661.3 241.4L661.8 241.6L662.2 241.6L662.5 241.5L662.6 241.4L662.6 241.3L662.5 241.2L662.5 241.1L662.4 241.0L662.3 240.9L662.2 240.7L662.1 240.6L661.9 240.4L661.7 240.2L661.4 239.9L661.1 239.6L660.8 239.3L660.2 238.8L659.8 238.4L659.4 238.0L659.2 237.6L659.0 237.3L659.0 237.1L659.1 237.0L659.2 236.9L659.3 236.9L659.5 236.9L659.8 236.9L660.1 237.0L660.5 237.2L660.9 237.4L661.3 237.7L661.8 238.0L662.3 238.3L662.8 238.7L663.5 239.1L664.0 239.6L664.6 240.0L665.1 240.5L665.5 240.9L665.9 241.3L666.3 241.8L666.5 242.1L666.8 242.5L666.9 242.8L667.0 243.0Z" stroke-width="0.35"/><path d="M693.6 265.3L693.5 265.5L693.4 265.6L693.2 265.7L692.9 265.7L692.6 265.6L692.2 265.5L691.7 265.3L691.2 265.1L690.6 264.7L689.9 264.3L689.1 263.9L688.3 263.3L688.5 263.8L688.6 264.2L688.7 264.6L688.7 265.0L688.8 265.4L688.7 265.7L688.5 266.3L688.2 266.8L687.8 267.0L687.2 267.1L686.5 267.0L685.6 266.7L684.6 266.3L683.4 265.7L682.1 264.9L680.6 263.9L678.9 262.8L677.1 261.6L675.4 260.3L673.8 259.1L672.3 257.9L671.0 256.7L669.9 255.6L668.9 254.6L668.1 253.6L667.5 252.5L667.0 251.6L666.7 250.6L666.5 249.7L666.5 248.8L666.7 248.0L667.0 247.4L667.4 247.0L668.1 246.8L668.8 246.8L669.8 247.0L670.8 247.4L672.1 248.0L673.4 248.8L675.0 249.8L676.6 251.0L678.5 252.4L680.6 254.2L682.5 256.0L684.1 257.6L685.5 259.1L686.6 260.5L687.5 261.8L688.1 262.2L688.6 262.5L689.0 262.7L689.3 262.8L689.5 262.8L689.6 262.7L689.6 262.6L689.5 262.6L689.5 262.5L689.4 262.4L689.4 262.2L689.3 262.1L689.1 261.9L689.0 261.8L688.8 261.5L688.5 261.3L688.3 261.0L688.0 260.7L687.5 260.1L687.1 259.6L686.8 259.2L686.6 258.9L686.4 258.7L686.4 258.5L686.5 258.4L686.6 258.3L686.7 258.4L686.9 258.4L687.2 258.5L687.5 258.7L687.8 258.9L688.2 259.2L688.6 259.5L689.0 259.9L689.4 260.2L689.9 260.7L690.5 261.2L691.0 261.7L691.5 262.2L691.9 262.7L692.3 263.1L692.7 263.6L693.0 264.0L693.2 264.4L693.4 264.7L693.5 264.9L693.6 265.2ZM681.4 259.8L681.5 259.1L681.5 258.5L681.5 257.9L681.3 257.4L681.2 256.9L681.0 256.4L680.7 255.9L680.3 255.4L679.9 254.9L679.4 254.3L678.8 253.8L678.2 253.3L677.6 252.8L677.0 252.4L676.5 252.1L676.0 251.9L675.7 251.9L675.3 251.9L675.1 252.0L674.8 252.2L674.6 252.6L674.5 253.0L674.3 253.6L674.2 254.3L674.2 255.0L674.2 255.7L674.2 256.3L674.3 256.9L674.4 257.4L674.7 257.9L674.9 258.4L675.3 258.8L675.7 259.3L676.1 259.7L676.7 260.2L677.3 260.7L677.9 261.1L678.5 261.4L679.0 261.7L679.5 261.9L679.9 262.0L680.2 262.0L680.5 261.8L680.8 261.6L681.0 261.3L681.2 260.9L681.3 260.4ZM680.6 253.0L679.3 251.6L678.0 250.2L676.7 248.8L675.3 247.4L674.0 246.0L672.7 244.6L671.3 243.3L671.4 243.0L673.2 244.5L675.1 246.0L677.0 247.5L678.8 249.1L679.6 250.2L680.4 251.3L681.2 252.4L682.0 253.5L682.8 254.6L682.8 254.8Z" stroke-width="0.27"/><path d="M702.7 275.3L704.3 276.6L705.4 277.5L706.4 278.5L707.4 279.4L708.3 280.3L709.2 281.2L710.1 282.1L711.8 284.1L713.2 285.8L714.2 287.2L714.9 288.4L715.3 289.2L715.3 289.9L715.2 290.2L715.1 290.6L715.1 290.9L715.0 291.2L714.9 291.6L714.8 291.9L714.7 292.3L714.6 292.6L714.5 293.0L716.5 295.2L716.4 295.5L715.0 294.1L713.5 292.6L712.1 291.1L710.7 289.7L709.2 288.2L707.7 286.8L706.3 285.4L706.3 285.0L708.2 286.6L708.3 286.3L708.4 285.9L708.5 285.5L708.6 285.2L708.7 284.8L708.7 284.4L708.8 284.1L708.9 283.7L709.0 283.3L709.0 283.1L709.0 282.9L708.9 282.7L708.8 282.4L708.6 282.1L708.4 281.7L708.1 281.3L707.8 280.9L707.5 280.5L707.1 280.0L706.6 279.5L706.2 279.0L705.6 278.5L705.0 277.9L704.4 277.3L703.8 276.8L703.3 276.3L702.7 275.8L702.6 276.2L702.5 276.6L702.4 277.1L702.3 277.5L702.2 277.9L702.2 278.3L702.1 278.8L702.0 279.2L701.9 279.6L701.8 280.1L701.7 280.5L703.7 282.5L703.6 282.9L702.1 281.5L700.5 280.1L699.0 278.7L697.4 277.4L695.9 276.0L694.3 274.7L692.7 273.4L692.8 272.8L695.0 274.5L695.1 274.0L695.2 273.6L695.2 273.1L695.3 272.6L695.4 272.1L695.5 271.7L695.6 271.2L695.7 270.7L695.7 270.3L695.8 269.8L695.9 269.3L696.0 268.8L693.8 266.6L693.9 266.1L695.3 267.5L696.8 268.8L698.2 270.2L699.7 271.6L701.1 273.0L702.5 274.4Z" stroke-width="0.18"/><path d="M721.7 299.3L720.7 297.9L719.8 296.7L719.1 295.7L718.7 294.8L718.5 294.2L718.5 293.7L718.6 293.6L718.9 293.6L719.2 293.7L719.7 294.1L720.3 294.6L721.1 295.3L721.9 296.1L722.8 297.1L723.8 298.3L725.0 299.6L726.2 301.1L727.5 302.7L727.7 303.1L728.1 303.5L728.4 304.0L728.8 304.5L729.2 305.0L729.6 305.6L730.0 306.1L730.4 306.6L730.7 307.1L731.0 307.5L731.2 307.9L731.5 308.2L732.6 309.5L733.7 310.9L734.7 312.3L735.8 313.7L736.4 314.7L735.6 313.9L734.8 313.0L734.1 312.2L734.4 312.8L734.6 313.3L734.8 313.7L734.9 314.0L734.9 314.2L734.9 314.4L734.8 314.5L734.5 314.4L734.2 314.1L733.7 313.7L733.2 313.1L732.5 312.4L731.8 311.6L730.9 310.6L730.0 309.4L728.9 308.1L727.7 306.7L726.4 305.1L725.9 304.5L725.4 303.9L724.9 303.3L724.4 302.7L723.9 302.0L723.4 301.4L722.8 301.2L722.9 301.3L722.9 301.4L723.0 301.6L723.1 301.8L723.3 302.0L723.5 302.3L723.7 302.6L724.0 302.9L724.3 303.3L724.5 303.6L724.8 304.0L725.2 304.4L726.6 306.1L728.0 307.9L729.4 309.6L731.4 312.1L732.9 314.2L734.1 316.0L734.9 317.3L735.3 318.1L735.3 318.6L735.2 318.6L735.1 318.6L734.9 318.5L734.6 318.3L734.3 318.0L734.0 317.7L733.5 317.2L733.1 316.7L732.5 316.2L731.9 315.5L731.3 314.8L730.6 314.0L729.8 313.2L729.0 312.2L728.1 311.2L727.2 310.1L726.2 309.0L725.1 307.7L723.8 306.3L722.6 305.0L721.5 303.7L720.5 302.6L719.6 301.6L718.8 300.6L718.2 299.8L717.6 299.1L717.2 298.5L716.9 298.0L716.8 297.7L716.8 297.4L716.8 297.4L716.9 297.4L717.0 297.4L717.2 297.5L717.4 297.6L717.6 297.8L717.9 298.0L718.3 298.4L718.8 298.8L719.3 299.2L720.0 299.8L720.7 300.5L720.3 300.0L719.9 299.5L719.6 299.1L719.3 298.7L719.0 298.2L718.7 297.8L718.5 297.5L718.3 297.1L718.2 296.9L718.1 296.6L718.0 296.5L718.0 296.3L719.0 297.1L719.9 297.8L720.8 298.5ZM731.2 313.6L731.2 313.4L731.1 313.1L730.8 312.6L730.3 312.0L729.7 311.2L729.0 310.3L727.8 308.9L726.6 307.4L725.3 305.9L724.1 304.5L722.8 303.1L722.3 302.5L721.8 302.1L721.4 301.9L721.1 301.7L720.9 301.6L720.9 301.7L720.9 301.8L720.9 302.0L721.1 302.3L721.3 302.6L721.6 303.0L722.0 303.5L722.4 304.0L722.9 304.6L723.4 305.2L724.0 305.9L724.6 306.6L725.2 307.3L726.1 308.4L727.0 309.3L727.7 310.2L728.4 311.0L729.0 311.6L729.6 312.2L730.1 312.7L730.5 313.1L730.8 313.4L731.0 313.6L731.2 313.6ZM726.5 304.7L727.0 305.3L727.4 305.8L727.8 306.2L728.1 306.6L728.4 306.8L728.7 307.1L728.9 307.3L729.1 307.4L729.3 307.4L729.4 307.4L729.5 307.4L729.6 307.3L729.6 307.1L729.6 306.9L729.6 306.7L729.5 306.5L729.4 306.2L729.2 305.9L729.0 305.5L728.7 305.1L728.4 304.6L728.1 304.1L727.7 303.6L727.2 303.0L726.8 302.4L726.4 301.9L726.0 301.5L725.7 301.2L725.4 300.9L725.1 300.7L724.9 300.5L724.7 300.4L724.6 300.4L724.4 300.4L724.3 300.4L724.3 300.6L724.2 300.7L724.2 301.0L724.3 301.2L724.4 301.4L724.5 301.7L724.6 302.0L724.8 302.4L725.1 302.8L725.4 303.2L725.7 303.7L726.1 304.2Z" stroke-width="0.11"/></g></svg>
<svg class="a" style="left:0;top:0" width="1200" height="675" viewBox="0 0 1200 675">
<defs>
<linearGradient id="tb" x1="0" x2="0" y1="0" y2="1"><stop offset="0" stop-color="#c9dbef"/><stop offset="1" stop-color="#b4cce8"/></linearGradient>
<linearGradient id="okg" x1="0" x2="0" y1="0" y2="1"><stop offset="0" stop-color="#eaf6fd"/><stop offset="0.5" stop-color="#d9f0fc"/><stop offset="0.51" stop-color="#bee6fd"/><stop offset="1" stop-color="#a7d9f5"/></linearGradient>
<linearGradient id="cg" x1="0" x2="0" y1="0" y2="1"><stop offset="0" stop-color="#f2f2f2"/><stop offset="0.5" stop-color="#ebebeb"/><stop offset="0.51" stop-color="#dddddd"/><stop offset="1" stop-color="#cfcfcf"/></linearGradient>
<linearGradient id="xg" x1="0" x2="0" y1="0" y2="1"><stop offset="0" stop-color="#e9a99c"/><stop offset="0.5" stop-color="#d9735f"/><stop offset="0.51" stop-color="#c8472b"/><stop offset="1" stop-color="#d8836a"/></linearGradient>
</defs>
<!-- dialog frame -->
<path d="M764.5 325V134.5q0-3 3-3h278q3 0 3 3V325z" fill="#dfe9f3" stroke="#3e4d5c" stroke-width="1"/>
<rect x="765" y="132" width="283" height="17.5" fill="url(#tb)"/>
<rect x="765" y="149.5" width="283" height="1.5" fill="#dce8f4"/>
<rect x="769.5" y="151" width="274.5" height="169.5" fill="#f0f0f0"/>
<path d="M765 324.5h283" stroke="#456f86" stroke-width="1.2"/>
<text x="770" y="143.8" font-family="Liberation Sans" font-size="9" fill="#1e395b" stroke="#1e395b" stroke-width="0.25">Warp Text</text>
<!-- close button -->
<rect x="1022" y="135" width="23.5" height="11.8" rx="2" fill="url(#xg)" stroke="#7a3a2c" stroke-width="0.8"/>
<path d="M1030.5 138l6 6M1036.5 138l-6 6" stroke="#fff" stroke-width="1.8"/>
<!-- group box -->
<path d="M784.5 163.5H775.5V313.5H965.5V163.5H944.5" fill="none" stroke="#c9c9c9" stroke-width="1"/>
<path d="M776.5 164.5V312.5H964.5" fill="none" stroke="#ffffff" stroke-width="1"/>
<text x="799.6" y="169.8" font-family="Liberation Sans" font-size="9.2" fill="#333" stroke="#333" stroke-width="0.25">Style:</text>
<!-- combo -->
<rect x="827.5" y="157.5" width="111" height="17" fill="#fff" stroke="#e2e2e2" stroke-width="1"/>
<path d="M827.5 157.5h111" stroke="#a9a9a9" stroke-width="1"/>
<path d="M831 162.5l4.7-1 4.5 1.5-1.5 7.5q-1.5-1.5-3-0.5l-2.8 0.2z" fill="none" stroke="#333" stroke-width="1"/>
<text x="843" y="169.8" font-family="Liberation Sans" font-size="8.8" fill="#222" stroke="#222" stroke-width="0.25">Arc</text>
<path d="M931 165.2h5.4l-2.7 3.3z" fill="#111"/>
<!-- radios -->
<circle cx="817.3" cy="194.5" r="4.3" fill="#e6e6e6" stroke="#8e8f8f" stroke-width="1"/>
<circle cx="817.3" cy="194.5" r="2.6" fill="#1f5f86"/>
<circle cx="816.6" cy="193.8" r="1" fill="#6fb6e0"/>
<text x="825" y="197.5" font-family="Liberation Sans" font-size="9.1" fill="#333" stroke="#333" stroke-width="0.25">Horizontal</text>
<circle cx="883.6" cy="194.5" r="4.3" fill="#f4f4f4" stroke="#8e8f8f" stroke-width="1"/>
<text x="892" y="197.5" font-family="Liberation Sans" font-size="9.3" fill="#333" stroke="#333" stroke-width="0.25">Vertical</text>
<!-- bend -->
<text x="786" y="220.8" font-family="Liberation Sans" font-size="9.2" fill="#333" stroke="#333" stroke-width="0.25">Bend:</text>
<rect x="915" y="210.8" width="31" height="13.8" fill="#fff" stroke="#dcdcdc" stroke-width="1"/>
<path d="M915 210.8h31" stroke="#b5b5b5" stroke-width="1"/>
<text x="920" y="220.8" font-family="Liberation Sans" font-size="9" fill="#222" stroke="#222" stroke-width="0.25">+64</text>
<text x="951" y="220.8" font-family="Liberation Sans" font-size="9.2" fill="#333" stroke="#333" stroke-width="0.25">%</text>
<rect x="786.5" y="234" width="159.5" height="3.6" rx="1.8" fill="#b0b0b0" stroke="#9a9a9a" stroke-width="0.6"/>
<path d="M913.5 239v-3.8l4-3 4 3v3.8z" fill="#efefef" stroke="#8a8a8a" stroke-width="0.9"/>
<!-- horizontal distortion -->
<text x="786" y="254.2" font-family="Liberation Sans" font-size="9.2" fill="#333" stroke="#333" stroke-width="0.25">Horizontal Distortion:</text>
<rect x="915" y="244.5" width="31" height="13.8" fill="#fff" stroke="#dcdcdc" stroke-width="1"/>
<path d="M915 244.5h31" stroke="#b5b5b5" stroke-width="1"/>
<rect x="919" y="247" width="15" height="9.2" fill="#3a8fe0"/>
<text x="919.3" y="254.2" font-family="Liberation Sans" font-size="9" fill="#fff" stroke="#fff" stroke-width="0.25">-95</text>
<text x="951" y="254.2" font-family="Liberation Sans" font-size="9.2" fill="#333" stroke="#333" stroke-width="0.25">%</text>
<rect x="786.5" y="267.8" width="159.5" height="3.6" rx="1.8" fill="#b0b0b0" stroke="#9a9a9a" stroke-width="0.6"/>
<path d="M786.5 272.8v-3.8l4-3 4 3v3.8z" fill="#efefef" stroke="#8a8a8a" stroke-width="0.9"/>
<!-- mouse cursor -->
<path d="M792.5 268.5v12l2.8-2.6 1.8 4 1.6-0.8-1.8-3.8h3.8z" fill="#fff" stroke="#222" stroke-width="0.9"/>
<!-- vertical distortion -->
<text x="786" y="288.2" font-family="Liberation Sans" font-size="9.2" fill="#333" stroke="#333" stroke-width="0.25">Vertical Distortion:</text>
<rect x="915" y="278.3" width="31" height="13.8" fill="#fff" stroke="#dcdcdc" stroke-width="1"/>
<path d="M915 278.3h31" stroke="#b5b5b5" stroke-width="1"/>
<text x="918.5" y="288.2" font-family="Liberation Sans" font-size="9" fill="#222" stroke="#222" stroke-width="0.25">0</text>
<text x="951" y="288.2" font-family="Liberation Sans" font-size="9.2" fill="#333" stroke="#333" stroke-width="0.25">%</text>
<rect x="786.5" y="301.3" width="159.5" height="3.6" rx="1.8" fill="#b0b0b0" stroke="#9a9a9a" stroke-width="0.6"/>
<path d="M863 306.3v-3.8l4-3 4 3v3.8z" fill="#efefef" stroke="#8a8a8a" stroke-width="0.9"/>
<!-- buttons -->
<rect x="980.3" y="166.6" width="58.4" height="13.2" rx="2" fill="url(#okg)" stroke="#3c7fb1" stroke-width="1.2"/>
<text x="1003.7" y="176.8" font-family="Liberation Sans" font-size="8.8" fill="#1a1a1a" stroke="#1a1a1a" stroke-width="0.25">OK</text>
<rect x="980.3" y="188.4" width="58.4" height="13.2" rx="2" fill="url(#cg)" stroke="#707070" stroke-width="1"/>
<text x="996.2" y="198.6" font-family="Liberation Sans" font-size="8.6" fill="#1a1a1a" stroke="#1a1a1a" stroke-width="0.25">Cancel</text>
<!-- red annotation boxes -->
<rect x="774" y="204.5" width="194" height="113.5" fill="none" stroke="#dc3535" stroke-width="3.8"/>
<rect x="974.8" y="158.6" width="72.8" height="25.2" fill="none" stroke="#dc3535" stroke-width="3.7"/>
<!-- arrows -->
<g stroke="#dc3a3a" stroke-width="4.2" fill="none" stroke-linecap="butt" stroke-linejoin="round">
<path d="M894 396L851.5 334"/>
<path d="M849 344.5L850.5 332L862 336"/>
<path d="M1102 232L1058 169"/>
<path d="M1057.5 178L1057 167L1068.5 170"/>
</g>
<text x="905" y="385" font-family="Liberation Serif" font-size="28" fill="#111">1</text>
<text x="1109.5" y="212" font-family="Liberation Serif" font-size="27.5" fill="#111">2</text>

<path d="M1062.5 588.5 C1061 582 1068 577 1077 575 C1090 572 1103 573 1110 581 C1115 588 1113 597 1108 602 C1115 605 1119 612 1117.5 620 C1115 632 1103 637.5 1088 637.5 C1075 637.5 1063 634 1061 625 C1059 617 1065 610 1071 610.5 C1076 611 1079 616.5 1084 617.5 C1090 619 1096 616 1095.5 612 C1095 607.5 1088 607 1082 607 C1077 606.5 1076.5 603 1077.5 600.5 C1079 597.5 1085 598.5 1089 597.5 C1093 596.5 1093 591 1089 590.5 C1084 590 1080 593.5 1075.5 594.5 C1069 596 1063.5 593.5 1062.5 588.5 Z" fill="#bdbdbd" stroke="#bdbdbd" stroke-width="25" stroke-linejoin="round" transform="translate(4 4)"/>
<path d="M1062.5 588.5 C1061 582 1068 577 1077 575 C1090 572 1103 573 1110 581 C1115 588 1113 597 1108 602 C1115 605 1119 612 1117.5 620 C1115 632 1103 637.5 1088 637.5 C1075 637.5 1063 634 1061 625 C1059 617 1065 610 1071 610.5 C1076 611 1079 616.5 1084 617.5 C1090 619 1096 616 1095.5 612 C1095 607.5 1088 607 1082 607 C1077 606.5 1076.5 603 1077.5 600.5 C1079 597.5 1085 598.5 1089 597.5 C1093 596.5 1093 591 1089 590.5 C1084 590 1080 593.5 1075.5 594.5 C1069 596 1063.5 593.5 1062.5 588.5 Z" fill="#b8b8b8" stroke="#b8b8b8" stroke-width="24" stroke-linejoin="round"/>
<path d="M1062.5 588.5 C1061 582 1068 577 1077 575 C1090 572 1103 573 1110 581 C1115 588 1113 597 1108 602 C1115 605 1119 612 1117.5 620 C1115 632 1103 637.5 1088 637.5 C1075 637.5 1063 634 1061 625 C1059 617 1065 610 1071 610.5 C1076 611 1079 616.5 1084 617.5 C1090 619 1096 616 1095.5 612 C1095 607.5 1088 607 1082 607 C1077 606.5 1076.5 603 1077.5 600.5 C1079 597.5 1085 598.5 1089 597.5 C1093 596.5 1093 591 1089 590.5 C1084 590 1080 593.5 1075.5 594.5 C1069 596 1063.5 593.5 1062.5 588.5 Z" fill="#fff" stroke="#fff" stroke-width="22" stroke-linejoin="round"/>
<path d="M1062.5 588.5 C1061 582 1068 577 1077 575 C1090 572 1103 573 1110 581 C1115 588 1113 597 1108 602 C1115 605 1119 612 1117.5 620 C1115 632 1103 637.5 1088 637.5 C1075 637.5 1063 634 1061 625 C1059 617 1065 610 1071 610.5 C1076 611 1079 616.5 1084 617.5 C1090 619 1096 616 1095.5 612 C1095 607.5 1088 607 1082 607 C1077 606.5 1076.5 603 1077.5 600.5 C1079 597.5 1085 598.5 1089 597.5 C1093 596.5 1093 591 1089 590.5 C1084 590 1080 593.5 1075.5 594.5 C1069 596 1063.5 593.5 1062.5 588.5 Z" fill="#f67070" stroke="#b24646" stroke-width="0.9"/>
<circle cx="1067.5" cy="588.3" r="2.8" fill="#ffd9d9"/>
<ellipse cx="1068.8" cy="623.3" rx="2.4" ry="5.5" transform="rotate(-35 1068.8 623.3)" fill="#ffd9d9"/>

</svg>

<div class="a" style="left:0;top:668px;width:1200px;height:7px;background:#000"></div>
<div class="a" style="left:1195px;top:0;width:5px;height:675px;background:#000"></div>
</body></html>
